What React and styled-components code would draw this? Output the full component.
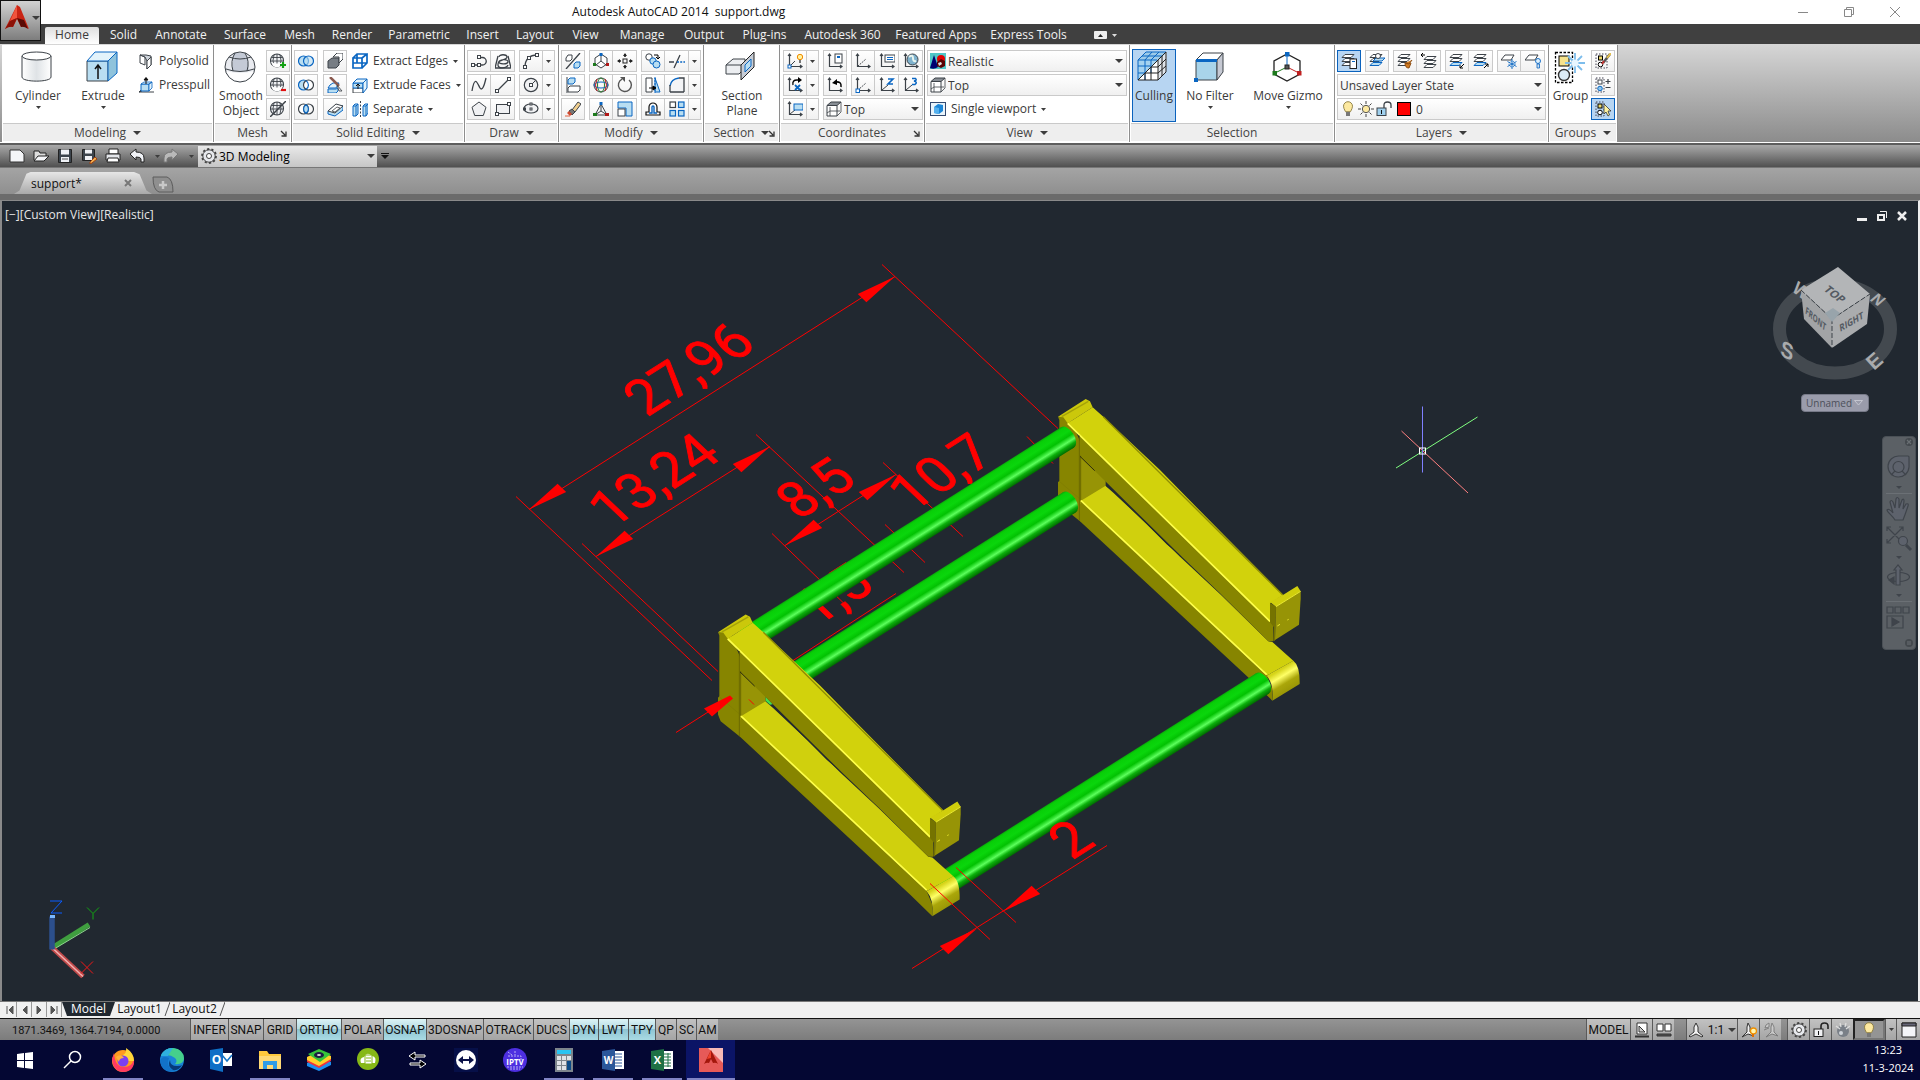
import React from "react";
import styled, { createGlobalStyle, css } from "styled-components";

const GlobalStyle = createGlobalStyle`
  * { box-sizing: border-box; }
  html, body { margin: 0; padding: 0; }
  body, button, select { font-family: "Open Sans", "Noto Sans", sans-serif; font-size: 12px; }
  button, select { margin: 0; padding: 0; border: 0; background: none; color: inherit; }
  svg { display: block; flex: none; }
`;

/* ---------- palette ---------- */
const INK = "#3c4248";
const BLUE = "#0a66c2";
const SKY = "#b9def2";
const GREY = "#e4e8ee";

/* ---------- icon drawings ---------- */
const L = (d, p = {}) => <path d={d} fill="none" stroke={INK} strokeWidth="1.3" {...p} />;
const Dot = ({ x, y, c = INK, s = 3 }) => (
  <rect x={x - s / 2} y={y - s / 2} width={s} height={s} fill="#fff" stroke={c} strokeWidth="1" />
);
const Axes = () => (
  <g fill="none" stroke={INK} strokeWidth="1.2">
    <path d="M2.5 1v13M1 3l1.500-2L4 3M2.500 13.500H15M13 12l2 1.500-2 1.500" />
  </g>
);
const Globe = ({ lower }) => (
  <g>
    <circle cx="7" cy="7.500" r="6.500" fill="#eef0f3" stroke={INK} strokeWidth="1.100" />
    <path d="M1 8h12M2 4.500h10M7 1v13M4 2q-2 5.500 0 11M10 2q2 5.500 0 11" fill="none" stroke={INK} strokeWidth=".9" />
    {lower && <path d="M1 9q6 3 12 0l-2 4q-4 2.500-8 0z" fill="#fff" />}
  </g>
);
const Layers3 = ({ hot }) => (
  <g fill="#fff" stroke={INK} strokeWidth="1">
    <path d="M1 12.500l3-3h9l-3 3z" fill={hot ? SKY : "#fff"} stroke={hot ? BLUE : INK} />
    <path d="M1 8.500l3-3h9l-3 3z" />
    <path d="M1 4.500l3-3h9l-3 3z" />
  </g>
);

const ICONS = {
  cylinder: (
    <g>
      <defs>
        <linearGradient id="cyl" x1="0" x2="1"><stop offset="0" stopColor="#fff" /><stop offset=".5" stopColor="#dfe3e6" /><stop offset="1" stopColor="#fff" /></linearGradient>
      </defs>
      <path d="M1 5v21c0 5.500 29 5.500 29 0V5" fill="url(#cyl)" stroke={INK} />
      <ellipse cx="15.500" cy="5" rx="14.500" ry="4" fill="#fff" stroke={INK} />
    </g>
  ),
  extrude: (
    <g>
      <path d="M1 10h21v20H1z" fill={SKY} stroke={INK} />
      <path d="M1 10l8-9h22l-9 9z" fill="#e3f3fb" stroke={BLUE} />
      <path d="M22 10l9-9v21l-9 8z" fill="#8fc3dc" stroke={BLUE} />
      <path d="M12 28V15M9 18l3-4 3 4" fill="none" stroke="#111" strokeWidth="1.500" />
    </g>
  ),
  polysolid: (
    <g>
      <path d="M2 2l5 2v8l-5-2z" fill="#fff" stroke={INK} />
      <path d="M2 2h6l5 1v9l-4 4V8L7 4z" fill="#cfd5dc" stroke={INK} />
      <path d="M9 8l4-4v8l-4 4z" fill="#fff" stroke={INK} />
    </g>
  ),
  presspull: (
    <g>
      <path d="M1 15l3-3M16 15H1l3-1" stroke={INK} fill="none" />
      <path d="M3 7h8v7H3z" fill={SKY} stroke={BLUE} />
      <path d="M3 7l3-2h8l-3 2zM11 7l3-2v6l-3 3z" fill="#e3f3fb" stroke={BLUE} strokeWidth=".8" />
      <path d="M8 7V1M6 3l2-2.500L10 3z" stroke="#111" fill="#111" />
    </g>
  ),
  smooth: (
    <g>
      <circle cx="16" cy="16" r="15" fill="#e9ebf0" />
      <path d="M10 2h11l3 8H8zM9 10h15l1 10H8z" fill="#c4cad6" />
      <path d="M2 20q14 4 28 0q-4 11-14 11T2 20z" fill="#fdfdfe" />
      <g fill="none" stroke={INK}>
        <circle cx="16" cy="16" r="15" />
        <path d="M5 6q11 4 22 0M2 18q14 5 28 0M11 2q-5 8-2 18M21 2q5 8 2 18" />
      </g>
    </g>
  ),
  meshAdd: <g><Globe lower /><path d="M13 9v6M10 12h6" stroke="#12a012" strokeWidth="2.200" /></g>,
  meshSub: <g><Globe lower /><path d="M11 13h5" stroke="#e01010" strokeWidth="2.200" /></g>,
  meshCut: <g><Globe /><path d="M0 16L16 0" stroke={INK} strokeWidth="1.500" /></g>,
  union: <g fill={SKY} stroke={BLUE} strokeWidth="1.200"><circle cx="5.500" cy="8" r="5" /><circle cx="10.500" cy="8" r="5" fillOpacity=".6" /></g>,
  subtract: <g strokeWidth="1.200"><circle cx="5.500" cy="8" r="5" fill={SKY} stroke={BLUE} /><circle cx="10.500" cy="8" r="5" fill="#fff" stroke={INK} /><path d="M8 3.700a5 5 0 0 1 0 8.600" fill="none" stroke={BLUE} /></g>,
  intersect: <g strokeWidth="1.200"><circle cx="5.500" cy="8" r="5" fill="#fff" stroke={INK} /><circle cx="10.500" cy="8" r="5" fill="none" stroke={INK} /><path d="M8 3.700a5 5 0 0 1 0 8.600a5 5 0 0 1 0-8.600" fill={SKY} stroke={BLUE} /></g>,
  thicken: <g stroke={INK}><path d="M1 8l4-3h7v7l-3 3H1z" fill="#777d84" /><path d="M6 4l4-4h6v6l-4 4V4z" fill="#fff" /></g>,
  slice: <g><path d="M3 8l3-2h6l-3 5H1z" fill="#e3f3fb" stroke={BLUE} /><path d="M1 12h8l2-1v3l-2 2H1z" fill={SKY} stroke={BLUE} /><path d="M3 0l9 9" stroke="#8a5a50" strokeWidth="2.500" /><path d="M10 8l5 6h-3z" fill={GREY} stroke={INK} strokeWidth=".8" /></g>,
  shell: <g><path d="M1 10l8-6 7 1v4l-8 6-7-2z" fill={SKY} stroke={BLUE} /><path d="M1 10l8-7 7 2-8 7z" fill="#fff" stroke={INK} /><path d="M5 10l5-4 3 1-5 4z" fill="none" stroke={INK} strokeWidth=".8" /></g>,
  extractEdges: <g fill="none" stroke={BLUE} strokeWidth="1.700"><path d="M1 5h9v10H1zM1 5l4-4h10l-5 4M15 1v9l-5 5M5 1v9H1M5 10h10" /></g>,
  extrudeFaces: <g><path d="M1 11h10v5H1z" fill="#fff" stroke={INK} /><path d="M1 6h10v5H1z" fill={SKY} stroke={BLUE} /><path d="M1 6l4-4h10l-4 4zM11 6l4-4v9l-4 5z" fill="#e3f3fb" stroke={BLUE} /><path d="M6 12V7M4 9l2-2 2 2" fill="none" stroke="#111" /></g>,
  separate: <g><path d="M1 5l2-2h3v10l-2 2H1zM11 5l2-2h3v9l-2 3h-3z" fill={SKY} stroke={BLUE} /><path d="M4 15V5h-3M14 15V5h-3M4 5l2-2M14 5l2-2" fill="none" stroke={BLUE} /><path d="M8.500 0v16" stroke={INK} strokeDasharray="2 1.500" /></g>,
  polyline: <g>{L("M2 12h9.500a3.500 3.500 0 0 0 0-7.500H8M2 12h5")}<Dot x={2} y={12} /><Dot x={8} y={12} /><Dot x={8} y={4} /></g>,
  helix: <g>{L("M4 4c0-3 8-3 8 0s-8 3-8 5 8 3 9 0-9-4-10 2 9 4 10 1")}{L("M3 3L0 15h16L13 3")}</g>,
  arc: <g>{L("M2 14C2 6 7 2 14 2")}<Dot x={2} y={14} /><Dot x={6} y={5} /><Dot x={14} y={2} /></g>,
  spline: L("M1 14C4-4 7 8 9 11S13 10 15 1"),
  line: <g>{L("M2 14L14 2")}<Dot x={2} y={14} /><Dot x={14} y={2} /></g>,
  circle: <g><circle cx="8" cy="8" r="6.700" fill="#f0f1f3" stroke={INK} strokeWidth="1.200" />{L("M8 8l4-4", { strokeWidth: 1 })}<Dot x={8} y={8} /></g>,
  polygon: <path d="M8 1l7 5.300-2.700 8.200H3.700L1 6.300z" fill="#f0f1f3" stroke={INK} />,
  rect: <g><rect x="1.500" y="3.500" width="13" height="9" fill="#f0f1f3" stroke={INK} /><Dot x={2} y={13} /><Dot x={14} y={3} /></g>,
  ellipse: <g><ellipse cx="8" cy="7.500" rx="7" ry="4.500" fill="#f0f1f3" stroke={INK} strokeWidth="1.200" /><Dot x={8} y={8} s={2} /><Dot x={1.5} y={8} s={2} /><Dot x={8} y={3} s={2} /></g>,
  move3: <g><path d="M1 5l2-3h4v4L5 8H1z" fill="#fff" stroke={INK} /><path d="M9 11l2-2h4v4l-2 2H9z" fill={SKY} stroke={BLUE} />{L("M1 16L15 0")}</g>,
  gizmoMove: <g><path d="M8 1l6 4v6l-6 4-6-4V5z" fill="#fff" stroke={INK} /><path d="M8 8V2M8 8l-5 4M8 8l5 4" stroke={INK} /><rect x="6.500" y="0" width="3" height="3" fill={BLUE} /><rect x="0" y="10" width="3" height="3" fill="#1d7a1d" /><rect x="13" y="10" width="3" height="3" fill="#b01818" /></g>,
  move: <g stroke="#222" fill="none"><rect x="6" y="6" width="4" height="4" /><path d="M8 4V1M8 12v3M4 8H1M12 8h3" strokeWidth="1.600" strokeDasharray="1.500 .7" /><path d="M6 3l2-3 2 3zM6 13l2 3 2-3zM3 6L0 8l3 2zM13 6l3 2-3 2z" fill="#222" stroke="none" /></g>,
  align: <g><path d="M2 0v16" stroke={INK} /><path d="M3 3l2-2h5v4L8 7H3z" fill={SKY} stroke={BLUE} /><path d="M3 11l2-2h10v4l-2 2H3z" fill="#fff" stroke={INK} /></g>,
  gizmoRotate: <g fill="none" strokeWidth="1"><circle cx="8" cy="8" r="7" stroke={INK} /><ellipse cx="8" cy="8" rx="3.500" ry="7" stroke="#2a7a2a" /><ellipse cx="8" cy="8" rx="7" ry="3" stroke={BLUE} /><path d="M4 2q-3 6 0 12M12 2q3 6 0 12" stroke="#c02020" /></g>,
  rotate: <g><path d="M12 3a6.500 6.500 0 1 1-7-.8" fill="none" stroke="#555" strokeWidth="1.400" /><path d="M3 0h5v5z" fill="#555" /></g>,
  mirror: <g><path d="M1 1h6v14H1z" fill="#fff" stroke={INK} /><path d="M10 1l5 14h-5z" fill={SKY} stroke={BLUE} /><path d="M10 0v16" stroke={BLUE} strokeDasharray="2 1" /><path d="M4 11h6M8 9l3 2-3 2z" stroke="#000" fill="#000" /></g>,
  fillet: <g><path d="M1 15V8q1-6 8-7h6v14z" fill="#f3f4f6" /><path d="M1 9q1-7 9-8" fill="none" stroke={BLUE} strokeWidth="1.400" />{L("M1 8v7M10 1h5v14M1 15h14")}</g>,
  erase: <g><path d="M7 9l6-8 3 2-6 8z" fill="#f1cf8f" stroke={INK} /><path d="M4 10l3-2 3 3-3 3z" fill="#777" stroke={INK} /><path d="M2 12l2-2 3 3-2 2z" fill="#d04a30" /><path d="M0 15h5" stroke="#e06040" /></g>,
  gizmoScale: <g><path d="M8 3L2 14h12zM8 10V3M8 10l-6 4M8 10l6 4" fill="none" stroke={INK} /><rect x="6.500" y="1" width="3" height="3" fill={BLUE} /><rect x="0" y="12" width="4" height="3" fill="#1d7a1d" /><rect x="12" y="12" width="4" height="3" fill="#b01818" /></g>,
  scale: <g><path d="M1 1h14v14H9V7H1z" fill={SKY} stroke={BLUE} /><rect x="1" y="8" width="7" height="7" fill="#fff" stroke={INK} /></g>,
  copy: <g><circle cx="4" cy="4" r="3.200" fill="#fff" stroke={INK} /><circle cx="8" cy="8" r="3.200" fill={SKY} stroke={BLUE} /><circle cx="11.500" cy="11.500" r="3.500" fill={SKY} stroke={BLUE} /><path d="M9 2h4v3M11 4l2 2 2-2" fill="none" stroke="#000" /></g>,
  trim: <g>{L("M0 9h5M11 2L5 15")}<path d="M8 9h8" stroke={BLUE} strokeWidth="1.400" strokeDasharray="2 1.200" /></g>,
  offset: <g fill="none"><path d="M1 14h14v-3h-3V6a4 4 0 0 0-8 0v5H1z" stroke="#111" strokeWidth="1.200" /><path d="M4 12h3V6a1 1 0 0 1 2 0v6h3" stroke={BLUE} strokeWidth="1.400" /></g>,
  array: <g strokeWidth="1.200"><rect x="1" y="1" width="5.500" height="5.500" fill="#fff" stroke={INK} /><g fill={SKY} stroke={BLUE}><rect x="9.500" y="1" width="5.500" height="5.500" /><rect x="1" y="9.500" width="5.500" height="5.500" /><rect x="9.500" y="9.500" width="5.500" height="5.500" /></g></g>,
  section: (
    <g>
      <path d="M1 14l7-6h12v9l-6 6H1z" fill="#eceef1" stroke={INK} /><path d="M1 14h15" stroke={INK} />
      <path d="M16 14l13-13v15L16 29z" fill="#c7ccd4" stroke="#222" /><path d="M20 14l6-6v7l-6 6z" fill={SKY} stroke={BLUE} />
    </g>
  ),
  ucs: <g><Axes /><path d="M3 13l5-5" stroke={INK} /><rect x="1" y="12" width="3" height="3" fill="#fff" stroke={BLUE} /><circle cx="13" cy="4" r="2.700" fill="#fff3a0" stroke="#f08a00" /><path d="M12 7h2v3h-2z" fill="#777" /></g>,
  ucsCalc: <g><Axes /><rect x="8" y="1" width="7" height="9" fill="#fff" stroke={INK} /><rect x="10" y="3" width="3" height="2" fill={BLUE} /></g>,
  ucsPlain: <g><Axes /><path d="M3 13l8-7" stroke={INK} strokeDasharray="1.500 1" /></g>,
  ucsList: <g><Axes /><rect x="6" y="2" width="10" height="7" fill="#fff" stroke={INK} /><path d="M8 4.500h6M8 6.500h6" stroke={BLUE} /></g>,
  ucsWorld: <g><Axes /><circle cx="9.500" cy="6.500" r="5.500" fill="#7fb2cd" stroke={INK} /><path d="M6 4q4-3 4 1t3 3" fill="none" stroke="#e8f4ee" strokeWidth="2" /></g>,
  ucsX: <g><Axes /><path d="M6 8q-1-5 4-5h3" fill="none" stroke="#000" strokeWidth="1.300" /><path d="M11 0l4 3-4 3z" /><path d="M8 8l5 5M13 8l-5 5" stroke={BLUE} strokeWidth="1.800" /></g>,
  ucsBack: <g><Axes /><path d="M14 10q1-6-6-5" fill="none" stroke="#000" strokeWidth="1.600" /><path d="M5 6l5-4v6z" /></g>,
  ucsOrigin: <g><Axes /><path d="M3 13l8-7" stroke={INK} strokeDasharray="1.500 1" /><rect x="1" y="12" width="3.500" height="3.500" fill="#fff" stroke={BLUE} /></g>,
  ucsZ: <g><Axes /><path d="M3 13l6-5" stroke={INK} /><path d="M9 2h5l-5 5h5" fill="none" stroke={BLUE} strokeWidth="1.600" /></g>,
  ucs3: <g><Axes /><path d="M3 13l6-5" stroke={INK} /><path d="M9 1.500h3.500q2 2-1.500 2.500q4 1 1 3.500H9" fill="none" stroke={BLUE} strokeWidth="1.500" /></g>,
  ucsView: <g><Axes /><path d="M3 13l5-4" stroke={INK} /><rect x="7" y="3" width="9" height="6" fill={SKY} stroke={BLUE} /></g>,
  topView: <g fill="none" stroke={INK}><path d="M1 4.500h10V15H1z" fill="#fff" /><path d="M1 4.500L5 1h10l-4 3.500z" fill="#888e95" /><path d="M11 15l4-4V1M4 15V6M1 12l3-2h10" strokeWidth=".8" /></g>,
  realistic: <g><rect width="16" height="16" fill="#4fc6c6" /><path d="M0 15L4 2l4 12q-4 3-8 1z" fill="#000070" /><circle cx="11" cy="6" r="4" fill="#e00000" /><path d="M7 9l4-3 4 2v5l-4 2-4-2z" fill="#5a0000" /><path d="M8 10l3-1 1 2-3 2z" fill="#ddd" /></g>,
  viewport: <g><rect x=".5" y="1.500" width="15" height="13" fill="#e9f4fb" stroke="#334a70" /><path d="M4 6l4-3 5 1v6l-4 3-5-1z" fill="#1a86d8" /><path d="M4 6l5 1v6l-5-1z" fill="#54b0ee" /></g>,
  culling: (
    <g>
      <path d="M1 9h20v20H1z" fill="#fff" /><path d="M1 9l8-8h21l-1 20-8 8V9z" fill="#dfe4ea" /><path d="M1 29V9l8-8h21L1 29z" fill="#7fbfe8" fillOpacity=".7" />
      <g fill="none" stroke={BLUE}><path d="M1 29V9l8-8h20M1 9h19M5 5h20M8 29V9l7-8M14 22V9l8-8M1 15h13M1 22h7" /></g>
      <g fill="none" stroke="#222"><path d="M21 9l8-8v20l-8 8zM1 29L29 1M1 29h20M8 22h13l8-7M14 16h7l8-8M8 22v7M14 16v13M25 5v20" /></g>
    </g>
  ),
  noFilter: <g><path d="M3 9h21v20H3z" fill="#a9d4ea" stroke={INK} /><path d="M3 9l7-7h20l-6 7z" fill="#fff" stroke={INK} /><path d="M24 9l6-7v19l-6 8z" fill="#c6c9d3" stroke={INK} /><path d="M3 8h21v3H3z" fill={BLUE} /><rect x="1" y="27" width="4" height="4" fill={BLUE} /></g>,
  gizmo: <g><path d="M16 3l13 7v13l-13 7L3 23V10z" fill="#fff" stroke="#222" strokeWidth="1.300" /><path d="M16 16V4" stroke={BLUE} /><path d="M16 16L4 22" stroke="#1d7a1d" /><path d="M16 16l12 6" stroke="#c02020" /><rect x="14" y="1" width="4.500" height="4.500" fill={BLUE} /><rect x="1.500" y="20" width="4.500" height="4.500" fill="#1d7a1d" /><rect x="26" y="20" width="4.500" height="4.500" fill="#c02020" /><rect x="14" y="14" width="4" height="4" fill="#555" stroke="#222" /></g>,
  layerProps: <g><Layers3 /><rect x="9" y="6" width="6.500" height="9.500" fill="#fff" stroke="#222" /><path d="M11 8.500h3" stroke={BLUE} /></g>,
  layerCur: <g><Layers3 hot /><path d="M4 8l3-3h9l-3 3z" fill={SKY} stroke={BLUE} /><circle cx="9" cy="3" r="2.500" fill="#fff" stroke={INK} /></g>,
  layerMatch: <g><Layers3 /><path d="M8 10l4 1 3-4M8 10q0 5 4 5l2-5" stroke="#8a4a10" fill="#d07a20" /></g>,
  layerPrev: <g transform="translate(2 2)"><Layers3 /><path d="M-2 0h4M0-2L-2 0l2 2" stroke="#000" fill="none" /></g>,
  layerIso: <g><Layers3 hot /><path d="M15 11l-4 4M11 12v3h3" stroke="#000" fill="none" /></g>,
  layerUniso: <g><Layers3 hot /><path d="M11 15l4-4M12 11h3v3" stroke="#000" fill="none" /></g>,
  layerFreeze: <g><path d="M0 7l4-5h9l-3 5z" fill="#fff" stroke={INK} /><path d="M11 6v10M6.500 8.500l9 5M15.500 8.500l-9 5" stroke={BLUE} strokeWidth=".9" /><circle cx="11" cy="11" r="3" fill="none" stroke={BLUE} strokeWidth=".9" strokeDasharray="1.500 1" /></g>,
  layerOff: <g><path d="M0 7l4-5h9l-3 5z" fill="#fff" stroke={INK} /><circle cx="13" cy="8" r="2.500" fill="#dff0fb" stroke={BLUE} strokeWidth=".9" /><path d="M12 11h2.500v4H12z" fill="#cfe0ee" stroke={BLUE} strokeWidth=".8" /></g>,
  bulb: <g><path d="M8 .7a4.500 4.500 0 0 1 4.500 4.500q0 2-2 5.500h-5q-2-3.500-2-5.500A4.500 4.500 0 0 1 8 .7z" fill="#fde9a0" stroke="#8a7a40" strokeWidth=".9" /><path d="M6 11h4v4H6z" fill="#777" /></g>,
  sun: <g><circle cx="8" cy="8" r="3.700" fill="#fde9a0" stroke="#555" /><path d="M8 0v3M8 13v3M0 8h3M13 8h3M2.500 2.500l2 2M11.500 11.500l2 2M13.500 2.500l-2 2M2.500 13.500l2-2" stroke="#444" /></g>,
  unlock: <g><rect x="1" y="7" width="9" height="7.500" fill="#9fd0ee" stroke={INK} /><path d="M8 7V4q0-3 3.500-3T15 4v3" fill="none" stroke={INK} strokeWidth="1.300" /><path d="M5.500 9v4" stroke="#111" /></g>,
  lockUi: <g><rect x="1" y="7" width="9" height="7.500" fill="#f0f1f3" stroke="#222" /><path d="M8 7V4q0-3 3.500-3T15 4v3" fill="none" stroke="#222" strokeWidth="1.600" /><path d="M5.500 9v4" stroke="#111" /></g>,
  group: (
    <g>
      <rect x="1.500" y="1.500" width="17" height="30" fill="none" stroke="#000" strokeDasharray="2.500 1.500" strokeWidth="1.300" />
      <rect x="5" y="5" width="10" height="10" fill="#f6e38c" stroke="#000" /><circle cx="10" cy="24" r="5.500" fill="#dcecf6" stroke="#333" strokeWidth="1.400" />
      <g stroke="#7dbdec" strokeWidth="1.800"><path d="M11 12h20M21 2v20M14 5l14 14M28 5L14 19" /></g><circle cx="21" cy="12" r="3.500" fill="#e8f6ff" />
    </g>
  ),
  groupEdit: <g><path d="M1 1h11v14H1z" fill="none" stroke="#445" strokeDasharray="1.500 1.500" /><rect x="3.500" y="3" width="4" height="4" fill="#ecd96a" stroke="#000" /><circle cx="5.500" cy="11.500" r="2.300" fill="#fff" stroke="#000" /><path d="M8 10l7-9" stroke="#555" strokeWidth="2.500" /><path d="M12 5l4-5" stroke="#e2c050" strokeWidth="2" /><path d="M7 11l2-3" stroke="#c03030" strokeWidth="2" /></g>,
  groupAdd: <g><path d="M1 1h8v14H1z" fill="none" stroke="#445" strokeDasharray="1.500 1.500" /><rect x="3" y="3" width="4" height="4" fill="#fff" stroke={INK} /><circle cx="5" cy="11.500" r="2.300" fill="#8ec8ee" stroke={BLUE} /><path d="M13 2v5M10.500 4.500h5M10.500 10.500h5" stroke={INK} strokeWidth="1.200" /></g>,
  groupSel: <g><path d="M1 1h8v14H1z" fill="none" stroke="#445" strokeDasharray="1.500 1.500" /><rect x="3" y="3" width="4" height="4" fill="#ecd96a" stroke="#000" /><circle cx="5" cy="11.500" r="2.300" fill="#fff" stroke="#000" /><path d="M9 3v10l2-2 2 4 1.500-1-1.500-4h3z" fill="#fff3a0" stroke="#333" strokeWidth=".8" /></g>,
  newFile: <path d="M1 2h10l4 4v8H1z" fill="#f4f5f8" stroke="#333" />,
  open: <g><path d="M1 12V3h5l1 2h6v3" fill="#ddd" stroke="#222" /><path d="M1 13l4-5h11l-5 5z" fill="#f4f5f8" stroke="#222" /></g>,
  save: <g><path d="M1.500 1.500h13v13h-13z" fill="#3c444c" stroke="#222" /><path d="M4 1.500h8v5H4zM4 9h8v5H4z" fill="#f0f2f6" /><path d="M5 11h6" stroke="#555" /></g>,
  saveAs: <g><path d="M1.500 1.500h12v11h-12z" fill="#3c444c" stroke="#222" /><path d="M4 1.500h7v4H4zM4 8h7v4H4z" fill="#f0f2f6" /><path d="M9 14l5-5 2 2-5 4-2 1z" fill="#f0b050" stroke="#a04010" /></g>,
  print: <g><path d="M4 1h9v5H4z" fill="#fff" stroke="#222" /><path d="M1 6h14v6H1z" fill="#e4e6ea" stroke="#222" /><path d="M3 10h10l1 4H2z" fill="#fff" stroke="#222" /></g>,
  undo: <path d="M1 6l6-5v3q8 0 8 6v4h-3v-3q0-2-5-2v3z" fill="#f0f2f6" stroke="#222" />,
  redo: <path d="M15 6L9 1v3q-8 0-8 6v4h3v-3q0-2 5-2v3z" fill="#b9b9b9" stroke="#777" />,
  gear: <g><circle cx="8" cy="8" r="6.200" fill="#e6e8ec" stroke="#444" strokeWidth="1" /><circle cx="8" cy="8" r="7" fill="none" stroke="#444" strokeWidth="1.800" strokeDasharray="2.200 2.200" /><circle cx="8" cy="8" r="2.500" fill="#fff" stroke="#444" /></g>,
  modelSpace: <g><path d="M3 1h10v11H3z" fill="#fff" stroke="#333" /><path d="M5 4v6h6z" fill="#ccc" stroke="#333" /><path d="M1 14.500h14" stroke="#333" strokeWidth="2" /></g>,
  quickView: <g><path d="M1 2h6v7H1zM9 2h6v7H9z" fill="#fff" stroke="#333" /><path d="M1 12h14v2H1z" fill="#555" stroke="#333" /></g>,
  annoScale: <path d="M8 1l2 4v5l5 4-1 1-6-3-6 3-1-1 5-4V5z" fill="#f2f2f2" stroke="#333" />,
  annoVis: <g><path d="M7 1l2 4v5l4 4-6-2-6 3 5-5V5z" fill="#f2f2f2" stroke="#333" /><circle cx="12.500" cy="9" r="3" fill="#fff6b0" stroke="#f09000" strokeWidth="1.300" /><path d="M12 12v3" stroke="#e07000" strokeWidth="2" /></g>,
  annoAuto: <g opacity=".55"><path d="M9 1l2 4v5l4 4-6-2-6 3 5-5V5zM3 3l3-2v4L2 6zM1 8l5-2" fill="#ddd" stroke="#555" /></g>,
  ball: <g><circle cx="8" cy="9" r="6" fill="#7a8088" /><path d="M5 1l1 4M11 1l-1 4M1 4l4 3M15 4l-4 3" stroke="#ddd" strokeWidth="1.300" /><circle cx="6" cy="11" r="2" fill="#cfd4da" /></g>,
  cleanScreen: <g><path d="M1 1h14v14H1z" fill="#f4f5f8" stroke="#222" /><path d="M1 1h14v3H1z" fill="#667" stroke="#222" /></g>,
};

const Icon = ({ name, size = 16, box = 16 }) => (
  <svg width={size} height={size} viewBox={`0 0 ${box} ${box}`} aria-hidden="true">{ICONS[name]}</svg>
);
const Caret = ({ w = 5, color = "#3c3c3c" }) => (
  <svg width={w} height={w === 5 ? 3 : 4} viewBox="0 0 8 4" preserveAspectRatio="none" aria-hidden="true">
    <path d="M0 0h8L4 4z" fill={color} />
  </svg>
);

/* ---------- frame ---------- */
const Page = styled.div`
  position: relative;
  display: flex;
  flex-direction: column;
  min-height: 100vh;
  background: #6b6b6b;
  color: #3a3a3a;
  overflow: hidden;
`;
const TitleBar = styled.header`
  display: grid;
  grid-template-columns: 1fr auto;
  height: 24px;
  padding-right: 2px;
  background: #fff;
  color: #111;
`;
const WindowTitle = styled.h1`
  margin: 0;
  padding-left: 572px;
  font-size: 12px;
  font-weight: 400;
  line-height: 24px;
  white-space: pre;
`;
const WindowButtons = styled.div`
  display: flex;
`;
const WindowButton = styled.button`
  display: grid;
  place-items: center;
  width: 46px;
  height: 23px;
`;
const AppButton = styled.button`
  position: absolute;
  top: 0;
  left: 0;
  z-index: 2;
  display: flex;
  align-items: center;
  gap: 3px;
  width: 41px;
  height: 41px;
  padding: 0 2px 6px 4px;
  border: 1px solid #111;
  background: linear-gradient(#d2d2d2, #7d7d7d);
`;
const MenuBar = styled.nav`
  display: flex;
  align-items: flex-end;
  height: 20px;
  padding-left: 45px;
  background: #404040;
`;
const MenuTab = styled.button`
  width: ${(p) => p.$w}px;
  height: 17px;
  padding-bottom: 2px;
  color: ${(p) => (p.$active ? "#3a3a3a" : "#f2f2f2")};
  background: ${(p) => (p.$active ? "linear-gradient(#dedede, #fff)" : "none")};
  border-radius: 2px 2px 0 0;
  line-height: 15px;
  text-align: center;
  white-space: nowrap;
`;
const MenuToggle = styled.button`
  display: flex;
  align-items: center;
  gap: 5px;
  height: 18px;
  padding-left: 20px;
`;
const MiniBox = styled.span`
  display: grid;
  place-items: center;
  width: 13px;
  height: 8px;
  border-radius: 1px;
  background: #eee;
`;

/* ---------- ribbon ---------- */
const Ribbon = styled.section`
  display: flex;
  height: 99px;
  padding: 1px 1px 0 2px;
  background: linear-gradient(#d6d6d6, #8c8c8c);
  border-bottom: 1px solid #fff;
`;
const Panel = styled.section`
  display: flex;
  flex-direction: column;
  width: ${(p) => p.$w}px;
  padding: 0 1px;
  border-right: 1px solid #8e8e8e;
  background: #fff;
`;
const PanelBody = styled.div`
  display: flex;
  flex: 1;
  gap: ${(p) => p.$gap || 0}px;
  padding: 5px 0 0 ${(p) => p.$left || 0}px;
`;
const PanelTitle = styled.h2`
  display: flex;
  align-items: center;
  justify-content: center;
  gap: 7px;
  position: relative;
  height: 18px;
  margin: 0 0 1px;
  border-top: 1px solid #c9c9c9;
  background: #eee;
  font-size: 12px;
  font-weight: 400;
  line-height: 16px;
  color: #444;
`;
const Launcher = styled.button`
  position: absolute;
  right: 3px;
  top: 6px;
  width: 7px;
  height: 7px;
`;
const Column = styled.div`
  display: flex;
  flex-direction: column;
  align-items: ${(p) => (p.$start ? "flex-start" : "stretch")};
  gap: 2px;
`;
const OffsetColumn = styled(Column)`
  margin-left: 4px;
`;
const Indented = styled.div`
  padding-left: 3px;
`;
const Line = styled.div`
  display: flex;
  gap: 4px;
`;
const Joined = styled.div`
  display: flex;
  border: 1px solid #cacaca;
  background: linear-gradient(#fff, #f1f1f1);
`;
const active = css`
  background: #b7d5f2;
  box-shadow: 0 0 0 1px #0a62bd;
`;
const IconButton = styled.button`
  display: grid;
  place-items: center;
  width: ${(p) => (p.$narrow ? 12 : 22)}px;
  height: 20px;
  ${(p) => p.$on && active}
  &:not(:first-child) {
    width: ${(p) => (p.$narrow ? 12 : 24)}px;
    border-left: 1px solid #cacaca;
  }
`;
const BigButton = styled.button`
  display: flex;
  flex-direction: column;
  align-items: center;
  width: ${(p) => p.$w}px;
  height: 73px;
  margin-top: -1px;
  padding-top: 2px;
  white-space: nowrap;
  line-height: 15px;
  ${(p) => p.$on && css`background: #b7d5f2; border: 1px solid #0a62bd; padding-top: 1px;`}
`;
const BigLabel = styled.span`
  margin: 3px 0;
`;
const SmallButton = styled.button`
  display: flex;
  align-items: center;
  gap: 5px;
  height: 22px;
  line-height: 20px;
  white-space: nowrap;
`;
const SelectBox = styled.label`
  display: flex;
  align-items: center;
  gap: 2px;
  width: ${(p) => p.$w}px;
  height: 22px;
  padding: 0 3px 0 2px;
  border: 1px solid #cacaca;
  background: linear-gradient(#fff, #f0f0f0);
`;
const Select = styled.select`
  flex: 1;
  min-width: 0;
  height: 20px;
  appearance: none;
  outline: none;
`;
const Swatch = styled.span`
  width: 14px;
  height: 14px;
  margin: 0 3px;
  border: 1px solid #000;
  background: #f00;
`;

const PickList = ({ w, icons = [], swatch, value, label }) => (
  <SelectBox $w={w}>
    {icons.map((n) => <Icon key={n} name={n} />)}
    {swatch && <Swatch />}
    <Select aria-label={label} defaultValue={value}><option>{value}</option></Select>
    <Caret w={8} />
  </SelectBox>
);

/* names joined in one bordered strip; "v" is a drop-down arrow */
const Strip = ({ names }) => (
  <Joined>
    {names.map((n, i) =>
      n === "v" ? (
        <IconButton key={i} $narrow aria-label="More"><Caret /></IconButton>
      ) : (
        <IconButton key={i} $on={n === "layerProps" || n === "groupSel"} aria-label={n}><Icon name={n} /></IconButton>
      )
    )}
  </Joined>
);
const Strips = ({ rows }) => <Column $start>{rows.map((r, i) => <Strip key={i} names={r} />)}</Column>;
const Big = ({ w, icon, lines, caret, on }) => (
  <BigButton $w={w} $on={on}>
    <Icon name={icon} size={34} box={34} />
    <BigLabel>{lines.map((l, i) => <React.Fragment key={l}>{i > 0 && <br />}{l}</React.Fragment>)}</BigLabel>
    {caret && <Caret />}
  </BigButton>
);
const Small = ({ icon, text, caret }) => (
  <SmallButton><Icon name={icon} />{text}{caret && <Caret />}</SmallButton>
);
const Group = ({ w, title, caret, launch, left, gap, children }) => (
  <Panel $w={w}>
    <PanelBody $left={left} $gap={gap}>{children}</PanelBody>
    <PanelTitle>
      {title}
      {caret && <Caret w={8} />}
      {launch && (
        <Launcher aria-label={`${title} options`}>
          <svg width="7" height="7" viewBox="0 0 7 7"><path d="M1 1l4 4M6 1.500V6H1.500" fill="none" stroke="#333" strokeWidth="1.300" /></svg>
        </Launcher>
      )}
    </PanelTitle>
  </Panel>
);

/* ---------- quick access + file tabs ---------- */
const QuickBar = styled.div`
  display: flex;
  align-items: center;
  height: 24px;
  padding-left: 8px;
  border-top: 2px solid #5e5e5e;
  background: linear-gradient(#a9a9a9, #505050);
`;
const QuickButton = styled.button`
  display: grid;
  place-items: center;
  width: ${(p) => p.$w || 24}px;
  height: 20px;
  padding-right: ${(p) => (p.$w ? 0 : 6)}px;
`;
const Workspace = styled.label`
  display: flex;
  align-items: center;
  gap: 2px;
  width: 179px;
  height: 21px;
  margin: 0 4px 0 2px;
  padding: 0 2px 0 3px;
  background: linear-gradient(#e9e9e9, #c6c6c6);
  color: #000;
`;
const FileTabs = styled.div`
  display: flex;
  align-items: flex-end;
  height: 27px;
  padding-left: 14px;
  border-top: 1px solid #777;
  background: linear-gradient(#a4a4a4, #8f8f8f);
`;
const FileTab = styled.button`
  display: flex;
  align-items: center;
  justify-content: space-between;
  width: 138px;
  height: 22px;
  padding: 0 20px 0 17px;
  clip-path: polygon(0 100%, 4% 84%, 9% 8%, 12% 0, 87% 0, 91% 10%, 96% 84%, 100% 100%);
  background: linear-gradient(#e6e6e6, #a9a9a9);
  color: #111;
`;
const NewTab = styled.button`
  width: 22px;
  height: 20px;
`;

/* ---------- drawing area ---------- */
const Viewport = styled.main`
  position: relative;
  flex: 1;
  min-height: 0;
  margin-top: 6px;
  border: solid #8a8a8a;
  border-width: 1px 2px 0 2px;
  border-right-color: #eee;
  background: #212830;
`;
const Scene = styled.svg`
  position: absolute;
  inset: 0;
  width: 100%;
  height: 100%;
`;
const ViewLabel = styled.div`
  position: absolute;
  top: 5px;
  left: 3px;
  color: #e6e6e6;
  line-height: 18px;
`;
const MdiButtons = styled.div`
  position: absolute;
  top: 9px;
  right: 10px;
  display: flex;
  gap: 8px;
`;
const MdiButton = styled.button`
  width: 12px;
  height: 12px;
`;
const CubeBox = styled.div`
  position: absolute;
  top: 59px;
  right: 13px;
  display: flex;
  flex-direction: column;
  align-items: center;
  gap: 12px;
  width: 140px;
`;
const UcsMenu = styled.button`
  display: flex;
  align-items: center;
  justify-content: space-between;
  width: 68px;
  height: 18px;
  padding: 0 5px 1px 4px;
  border: 1px solid #777a88;
  border-radius: 4px;
  background: #9a9cab;
  color: #4c505a;
  font-size: 10px;
`;
const NavBar = styled.div`
  position: absolute;
  top: 235px;
  right: 2px;
  width: 34px;
  border: 1px solid #4a5056;
  border-radius: 4px;
  background: #5b6065;
`;

/* ---------- bottom ---------- */
const LayoutTabs = styled.div`
  display: flex;
  align-items: flex-start;
  height: 17px;
  padding-left: 2px;
  border-top: 1px solid #777;
  background: #f0f0f0;
  color: #111;
`;
const NavArrow = styled.button`
  display: grid;
  place-items: center;
  width: 15px;
  height: 15px;
  border-right: 1px solid #999;
`;
const LayoutTab = styled.button`
  width: ${(p) => p.$w}px;
  height: 14px;
  line-height: 14px;
  text-align: center;
  color: ${(p) => (p.$on ? "#fff" : "#111")};
  background: ${(p) => (p.$on ? "#212830" : "none")};
  clip-path: ${(p) => (p.$on ? "polygon(0 0, 100% 0, calc(100% - 5px) 100%, 5px 100%)" : "none")};
`;
const Slash = styled.svg`
  width: 6px;
  height: 14px;
`;
const StatusBar = styled.footer`
  display: flex;
  height: 22px;
  border-top: 1px solid #111;
  background: linear-gradient(#949494, #7c7c7c);
  color: #111;
  font-family: Roboto, "Liberation Sans", sans-serif;
`;
const Coordinates = styled.div`
  width: 190px;
  padding: 2px 0 0 12px;
  font-size: 11px;
  line-height: 20px;
`;
const Spacer = styled.div`
  flex: ${(p) => (p.$w ? `0 0 ${p.$w}px` : "1")};
`;
const StatusButton = styled.button`
  display: flex;
  align-items: center;
  justify-content: center;
  gap: 4px;
  width: ${(p) => p.$w}px;
  border-left: 1px solid #5a5a5a;
  background: ${(p) => (p.$on ? "linear-gradient(#dcf3f6 0%, #b4dbe3 48%, #8fc4d2 50%, #a9dbe4 100%)" : "linear-gradient(#c2c2c2, #a4a4a4)")};
  ${(p) => p.$pressed && css`background: #949494; border: 2px inset #777;`}
  font-family: inherit;
  white-space: nowrap;
`;
const TaskBar = styled.footer`
  display: flex;
  justify-content: space-between;
  height: 40px;
  background: #040733;
  color: #fff;
`;
const TaskList = styled.div`
  display: flex;
`;
const Task = styled.button`
  display: flex;
  flex-direction: column;
  align-items: center;
  justify-content: space-between;
  width: 49px;
  height: 40px;
  padding-top: 8px;
  background: ${(p) => (p.$on ? "#0b1466" : "none")};
`;
const Underline = styled.span`
  width: ${(p) => (p.$wide ? "48px" : "40px")};
  height: 2px;
  background: ${(p) => (p.$run ? "#8184c4" : "transparent")};
`;
const Clock = styled.time`
  width: 64px;
  line-height: 18px;
  padding-top: 1px;
  font-size: 11px;
  text-align: center;
`;

/* ---------- model geometry ---------- */
const arrow = ([x, y], s) =>
  `${x},${y} ${x + s * 28.6},${y - s * 25.7} ${x + s * 37.2},${y - s * 17.6}`;
const DIM_TEXT = [
  ["27,96", 647, 418], ["13,24", 612, 529], ["8,5", 799, 521], ["10,7", 912, 513], ["1,5", 817, 627],
];
const DIM_LINES = [
  "M529 510L895 277", "M596 557L770 447", "M785 546L896 475",
  "M516 497L712 681", "M582 544L718 672", "M882 265L1058 429",
  "M756 435L904 573", "M772 534L843 603", "M883 463L963 537", "M885 525L925 563",
  "M1027 437L1053 464", "M793 661L896 594",
];
const DIM_ARROWS = [
  [[529, 510], 1], [[895, 277], -1], [[596, 557], 1], [[770, 447], -1], [[785, 546], 1], [[896, 475], -1],
];

const DimText = ({ t, x, y }) => (
  <text transform={`translate(${x} ${y}) rotate(-32.500) skewX(14)`} fontFamily="Roboto, 'Liberation Sans', sans-serif" fontSize="54" fill="#f00" stroke="#f00" strokeWidth=".8">{t}</text>
);
const Tube = ({ x, y, len }) => (
  <g transform={`translate(${x} ${y}) rotate(-32.200)`}>
    <rect x="0" y="-12" width={len} height="24" fill="url(#tube)" />
    <ellipse cx={len} cy="0" rx="7" ry="12" fill="url(#tube)" />
  </g>
);
const Bracket = ({ tubeEnd }) => (
  <g>
    <path d="M114 158L118 168V350L114 355V405L122 425L180 472H200V280L150 160z" fill="#878500" />
    <path d="M118 352L180 405" stroke="#767400" />
    <path d="M180 270H260V420H180z" fill="#979406" />
    <path d="M183 410L257 365L275 378L480 578L600 690L745 832L757 834L820 890L740 935z" fill="#d0d00d" />
    <path d="M183 410L740 935L757 975V1010L690 945L180 472z" fill="#878500" />
    <path d="M740 935L820 890Q840 905 839 960L757 1010Q762 960 740 935z" fill="url(#cap)" />
    <path d="M257 350L487 580L440 541L380 480L280 386L257 366z" fill="#212830" />
    {tubeEnd && <path d="M257 352L278 374L270 376L257 364z" fill="#3fe04f" />}
    <path d="M143 178L760 775V832H745L600 688L487 580L180 277V215z" fill="#878500" />
    <path d="M143 178L218 130L250 158L420 318L500 400L790 693L750 718V775z" fill="#d2d20c" />
    <path d="M114 158L197 105L210 112L218 130L143 178L130 160z" fill="#cbc80b" />
    <path d="M125 158L205 112" stroke="#a5a208" strokeWidth="4" fill="none" />
    <path d="M143 178L750 772M183 410L740 932" stroke="#ffff4a" strokeWidth="5" fill="none" />
    <path d="M250 158L788 693" stroke="#8e8c04" strokeWidth="4" fill="none" />
    <path d="M178 215V470M182 275V408" stroke="#6b6900" strokeWidth="3" fill="none" />
    <path d="M180 277L224 320" stroke="#2a2a10" strokeWidth="3" />
    <path d="M750 716L768 728L765 830H760L762 790L750 775z" fill="#757300" />
    <path d="M768 728L842 682V705L837 782L765 828z" fill="#979406" />
    <path d="M772 786l8-5M802 768l4-2" stroke="#ecea30" strokeWidth="3" />
    <path d="M750 714L790 692L832 666L842 682L768 728z" fill="#d0ce0c" />
    <path d="M768 728L842 682" stroke="#ecea30" strokeWidth="3" />
  </g>
);

const Drawing = () => (
  <Scene viewBox="2 202 1916 799" role="img" aria-label="Support model">
    <defs>
      <linearGradient id="tube" x1="0" x2="0" y1="0" y2="1">
        <stop offset="0" stopColor="#0aa80a" /><stop offset=".08" stopColor="#08cf08" /><stop offset=".3" stopColor="#0ad60c" />
        <stop offset=".48" stopColor="#02c202" /><stop offset=".68" stopColor="#5cff5c" /><stop offset=".82" stopColor="#0bb00b" /><stop offset="1" stopColor="#006c00" />
      </linearGradient>
      <linearGradient id="cap" x1="0" x2=".5" y1="0" y2="1">
        <stop offset="0" stopColor="#d0d00d" /><stop offset=".35" stopColor="#d6d41a" /><stop offset=".5" stopColor="#ffff66" /><stop offset=".68" stopColor="#aaa60a" /><stop offset="1" stopColor="#8f8c04" />
      </linearGradient>
    </defs>
    <g stroke="#f00" strokeWidth="1" fill="none">{DIM_LINES.map((d) => <path key={d} d={d} />)}</g>
    {DIM_TEXT.map(([t, x, y]) => <DimText key={t} t={t} x={x} y={y} />)}
    {DIM_ARROWS.map(([p, s]) => <polygon key={p} points={arrow(p, s)} fill="#f00" />)}
    <g transform="translate(1020 364.500) scale(.33333)"><Bracket /></g>
    <Tube x={745} y={641} len={381} />
    <Tube x={785} y={682} len={336} />
    <Tube x={940} y={887} len={381} />
    <g transform="translate(680 580) scale(.33333)"><Bracket tubeEnd /></g>
    <DimText t="2" x={1072} y={861} />
    <g stroke="#f00" fill="none">
      <path d="M912 969L1107 846M930 884L990 940M956 868L1016 923M676 733L712 710M749 700L754 705" />
    </g>
    <g fill="#f00">
      <polygon points={arrow([1003, 912], 1)} /><polygon points={arrow([977, 929], -1)} />
      <polygon points="733,699 730,696 704,709 712,717" />
    </g>
    <g fill="none">
      <path d="M1396 468.500L1477.500 417.500" stroke="#80ff80" /><path d="M1401.500 431.500L1468 493.500" stroke="#ff8080" />
      <path d="M1422.500 407v66" stroke="#8080ff" /><rect x="1419.500" y="448.500" width="6" height="6" stroke="#fff" />
    </g>
    <g fill="none">
      <path d="M54 947L89 925" stroke="#3f9f3f" strokeWidth="5" /><path d="M55 949L90 928" stroke="#8fd98f" strokeWidth="1" />
      <path d="M52 948L83 977" stroke="#c04a4a" strokeWidth="5" /><path d="M53 949L83 977" stroke="#f0b0b0" strokeWidth="1.500" />
      <path d="M52 950V917" stroke="#2c4f8c" strokeWidth="5.500" /><path d="M50 917h5" stroke="#7ab8ff" strokeWidth="3" />
      <path d="M50 901.500H62L51 913.500H62" stroke="#0a5cff" /><path d="M87 908L93 914L99 908M93 914V920" stroke="#12a812" />
      <path d="M81 962L93 974M93 962L81 974" stroke="#f01818" />
    </g>
  </Scene>
);

const cubeText = { fontFamily: "'Open Sans', sans-serif", fontWeight: 700, fill: "#545a62" };
const ViewCube = () => (
  <CubeBox>
    <svg width="140" height="122" viewBox="1765 260 140 122" role="img" aria-label="View cube">
      <ellipse cx="1835" cy="329" rx="55.500" ry="44" fill="none" stroke="#43494f" strokeWidth="13" />
      <g fontFamily="'Liberation Sans', sans-serif" fontWeight="700" fill="#a9abad">
        <text transform="translate(1791 291) rotate(35)" fontSize="18">W</text>
        <text transform="translate(1869 300) rotate(35) skewX(-14)" fontSize="16">N</text>
        <text transform="translate(1780 355) rotate(28) skewX(20)" fontSize="21">S</text>
        <text transform="translate(1874 371) rotate(-42)" fontSize="21">E</text>
      </g>
      <path d="M1838 267L1870 294L1832 319L1801 290z" fill="#b3b5b7" />
      <path d="M1801 290L1832 319V348L1804 319z" fill="#a2a4a6" />
      <path d="M1832 319L1870 294L1867 324L1832 348z" fill="#aaacae" />
      <path d="M1801 290L1832 319L1870 294M1832 319V348" fill="none" stroke="#3c4248" strokeDasharray="5 2" />
      <path d="M1825 313l8-5 7 5-8 9z" fill="#98a4ab" />
      <text transform="translate(1823 290) rotate(38) skewX(-14)" fontSize="11" {...cubeText}>TOP</text>
      <text transform="translate(1805 313) rotate(42) skewX(32)" fontSize="8" {...cubeText}>FRONT</text>
      <text transform="translate(1840 332) rotate(-30) skewX(-22)" fontSize="9" {...cubeText}>RIGHT</text>
    </svg>
    <UcsMenu>Unnamed
      <svg width="9" height="6" viewBox="0 0 9 6"><path d="M.5.5h8l-4 4.500z" fill="none" stroke="#c4c6d0" /></svg>
    </UcsMenu>
  </CubeBox>
);

const NavTools = () => (
  <NavBar>
    <svg width="32" height="212" viewBox="0 0 32 212" fill="none" stroke="#3f444b" strokeWidth="1.200" role="img" aria-label="Navigation tools">
      <circle cx="26" cy="5" r="4" fill="#44494e" stroke="none" /><path d="M24 3l4 4M28 3l-4 4" stroke="#6a7074" />
      <path d="M16 19h9q1 0 1 1v10a10.500 10.500 0 1 1-10-11z" fill="#5d626c" /><circle cx="15.500" cy="30" r="5.500" /><path d="M12 34l-4 4M19 34l4 4" />
      <path d="M13 49h6l-3 3z" fill="#3f444b" stroke="none" /><path d="M3 56.500h26M3 164.500h26" stroke="#6b7075" />
      <path d="M12 83C9 78 4 75 4 73q2-2 6 3L7 65q1-3 3 0l2 6 1-9q1-3 3 0v9l3-8q2-2 2 1l-1 8 3-5q3-1 2 2-3 9-5 14z" fill="#5d626c" />
      <path d="M4 90l16 16M20 90L4 106M4 94v-4h4M16 90h4v4M4 102v4h4" /><circle cx="20" cy="104" r="4.500" fill="#5d626c" /><path d="M23 108l5 5" strokeWidth="3" />
      <path d="M13 119h6l-3 3zM13 157h6l-3 3z" fill="#3f444b" stroke="none" />
      <ellipse cx="15.500" cy="140" rx="11" ry="4.500" /><path d="M13 148v-15h-2l4-5 4 5h-2v15z" fill="#5d626c" /><path d="M6 143l5-3v7z" fill="#3f444b" />
      <path d="M4 170h6v6H4zM12 170h6v6h-6zM20 170h6v6h-6zM4 179h16v12H4z" /><path d="M9 181l7 4-7 4z" fill="#3f444b" />
      <circle cx="26" cy="206" r="4" fill="#44494e" stroke="none" /><path d="M24 205h4M24 207h4" stroke="#6a7074" />
    </svg>
  </NavBar>
);

/* ---------- task bar drawings ---------- */
const AcadA = ({ size = 24 }) => (
  <svg width={size} height={size + 4} viewBox="0 0 24 28" aria-hidden="true">
    <path d="M12 1L0 25q4-3 8-2l4-8 4 8q4-1 8 2L15 3z" fill="#c92414" />
    <path d="M12 1L5 17l7-3z" fill="#f0543c" /><path d="M12 14L5 17 0 25q4-3 8-2z" fill="#8c1208" /><path d="M12 14l7 2 4 9q-4-3-7-2z" fill="#5a0a04" />
  </svg>
);
const t = { fontFamily: "'Open Sans', sans-serif", fontWeight: 700, fill: "#fff", textAnchor: "middle" };
const TASKS = [
  ["Start", 0, <path key="a" d="M4 6l7-1v7H4zM12 5l8-1v8h-8zM4 13h7v7l-7-1zM12 13h8v8l-8-1z" fill="#fff" />],
  ["Search", 0, <g key="a" fill="none" stroke="#fff" strokeWidth="1.500"><circle cx="13" cy="9" r="5.500" /><path d="M9 13l-7 7" /></g>],
  ["Firefox", 1, <g key="a"><circle cx="12" cy="13" r="11" fill="#ff9a1f" /><path d="M1 11q1 13 12 13 11-1 10-13-2 8-10 8Q4 19 3 5z" fill="#ff3a62" /><path d="M12 7q4-2 3-7 8 5 8 13H12z" fill="#ffd63a" /><circle cx="12" cy="13" r="5.500" fill="#7b3ff2" /><path d="M5 9q5-4 8 1-5 0-5 4z" fill="#ffb03a" /></g>],
  ["Edge", 0, <g key="a"><circle cx="12" cy="12" r="12" fill="#1a84d8" /><path d="M1 8Q4 0 13 0q11 1 11 11-1 6-9 5 3-3 0-6-6-5-14-2z" fill="#45cf8c" /><path d="M1 8Q4 0 13 0L8 8z" fill="#2fb0e0" /><path d="M9 10q-4 9 6 13Q2 26 0 13 2 7 9 10z" fill="#1272c8" /><path d="M10 12q0 6 7 6 4 0 5-1-3 6-9 5-6-4-3-10z" fill="#073a78" /></g>],
  ["Outlook", 0, <g key="a"><path d="M13 5h10v13H13z" fill="#fff" /><path d="M13 7l5 6 5-6" fill="none" stroke="#1272c4" strokeWidth="1.500" /><path d="M1 2l13-2v24L1 21z" fill="#0f6fc6" /><text x="7.500" y="16" fontSize="12" {...t}>O</text></g>],
  ["Explorer", 1, <g key="a"><path d="M1 3h8l2 3h12v15H1z" fill="#ffc83d" /><path d="M1 8h22v13H1z" fill="#ffd976" /><path d="M5 13h14v8h-4v-4H9v4H5z" fill="#2f9be6" /></g>],
  ["BlueStacks", 0, <g key="a"><path d="M0 15l12-6 12 5v3l-12 6L0 18z" fill="#1b8ef0" /><path d="M0 11l12-6 12 5v3l-12 7L0 14z" fill="#f0333a" /><path d="M0 9l12-6 12 5v3l-12 7L0 12z" fill="#ffd02a" /><path d="M1 6l11-5 12 5-11 8z" fill="#36c43a" /><ellipse cx="12" cy="7" rx="5" ry="3" fill="#1c1f44" /><ellipse cx="12" cy="7" rx="2" ry="1" fill="#ddd" /></g>],
  ["Cloud", 0, <g key="a"><circle cx="12" cy="11" r="11" fill="#86b817" /><path d="M5 15q-2-5 3-6 3-6 8-1 5 1 3 7z" fill="#fff" /><path d="M9 7h7v9H9z" fill="#fff" stroke="#86b817" /><path d="M10 10h5M10 13h5" stroke="#86b817" /></g>],
  ["Transfer", 0, <g key="a" fill="#000" stroke="#fff" strokeWidth="1"><path d="M4 8l6-4v3h10v2H10v3zM21 16l-6-4v3H5v2h10v3z" /></g>],
  ["TeamViewer", 0, <g key="a"><rect width="24" height="24" fill="#0b1c6a" opacity=".4" /><circle cx="12" cy="12" r="10" fill="#fff" /><path d="M4 12l5-4v3h6V8l5 4-5 4v-3H9v3z" fill="#0a1148" /></g>],
  ["IPTV", 0, <g key="a"><circle cx="12" cy="12" r="12" fill="#4d2fe0" /><path d="M5 4l4 3M12 3v4M5 8h13v4M4 19h16M7 21h10" stroke="#b9aef5" strokeDasharray="2 1" fill="none" /><text x="12" y="17" fontSize="8" {...t}>IPTV</text></g>],
  ["Calculator", 1, <g key="a"><rect x="3" width="18" height="24" fill="#7d858c" /><rect x="5" y="2" width="14" height="4" fill="#29c4f2" /><g fill="#dfe3e7"><path d="M5 8h4v4H5zM10 8h4v4h-4zM15 8h4v4h-4zM5 13h4v4H5zM10 13h4v4h-4zM5 18h4v4H5zM10 18h4v4h-4z" /></g><path d="M15 13h4v9h-4z" fill="#0b4a86" /></g>],
  ["Word", 1, <g key="a"><path d="M12 3h11v18H12z" fill="#fff" /><path d="M14 6h7M14 9h7M14 12h7M14 15h7M14 18h7" stroke="#2b579a" /><path d="M1 3l13-2v22L1 21z" fill="#2b579a" /><text x="7.500" y="16" fontSize="10" {...t}>W</text></g>],
  ["Excel", 1, <g key="a"><path d="M12 3h11v18H12z" fill="#fff" /><path d="M14 6h7M14 9h7M14 12h7M14 15h7M14 18h7M18 5v14" stroke="#217346" /><path d="M1 3l13-2v22L1 21z" fill="#1e7145" /><text x="7.500" y="16" fontSize="11" {...t}>X</text></g>],
  ["AutoCAD", 2, <g key="a"><rect width="24" height="24" fill="#e65a58" /><path d="M9 0h15v15z" fill="#ffe3e0" opacity=".7" /><path d="M12 2L5 16q3-2 5-1l2-4 2 4q3-1 5 1z" fill="#a3170c" /><path d="M12 2L8 11l4-1z" fill="#f0432c" /></g>],
];

const MENU = [["Home", 54], ["Solid", 49], ["Annotate", 66], ["Surface", 62], ["Mesh", 47], ["Render", 58], ["Parametric", 76], ["Insert", 51], ["Layout", 54], ["View", 47], ["Manage", 66], ["Output", 58], ["Plug-ins", 63], ["Autodesk 360", 93], ["Featured Apps", 94], ["Express Tools", 91]];
const TOGGLES = [["INFER", 38], ["SNAP", 35], ["GRID", 33], ["ORTHO", 45], ["POLAR", 42], ["OSNAP", 43], ["3DOSNAP", 57], ["OTRACK", 50], ["DUCS", 36], ["DYN", 29], ["LWT", 30], ["TPY", 27], ["QP", 21], ["SC", 20], ["AM", 22]];
const LIT = ["ORTHO", "OSNAP", "DYN", "LWT", "TPY"];

const TabEdge = () => <Slash viewBox="0 0 6 14"><path d="M6 0L1 14" stroke="#555" /></Slash>;

export default function App() {
  return (
    <Page>
      <GlobalStyle />
      <AppButton aria-label="Application menu"><AcadA /><Caret w={8} /></AppButton>
      <TitleBar>
        <WindowTitle>{"Autodesk AutoCAD 2014  support.dwg"}</WindowTitle>
        <WindowButtons>
          <WindowButton aria-label="Minimize"><svg width="10" height="10"><path d="M0 5.500h10" stroke="#888" /></svg></WindowButton>
          <WindowButton aria-label="Restore"><svg width="10" height="10" fill="none" stroke="#888"><path d="M.5 2.500h7v7h-7zM2.500 2.500v-2h7v7h-2" /></svg></WindowButton>
          <WindowButton aria-label="Close"><svg width="10" height="10"><path d="M0 0l10 10M10 0L0 10" stroke="#888" /></svg></WindowButton>
        </WindowButtons>
      </TitleBar>
      <MenuBar>
        {MENU.map(([m, w], i) => <MenuTab key={m} $w={w} $active={i === 0}>{m}</MenuTab>)}
        <MenuToggle aria-label="Minimize ribbon">
          <MiniBox><svg width="5" height="3"><path d="M0 3h5L2.500 0z" fill="#222" /></svg></MiniBox><Caret color="#ddd" />
        </MenuToggle>
      </MenuBar>

      <Ribbon>
        <Group w={212} title="Modeling" caret left={1}>
          <Big w={68} icon="cylinder" lines={["Cylinder"]} caret />
          <Big w={62} icon="extrude" lines={["Extrude"]} caret />
          <OffsetColumn>
            <Small icon="polysolid" text="Polysolid" />
            <Small icon="presspull" text="Presspull" />
          </OffsetColumn>
        </Group>
        <Group w={78} title="Mesh" launch left={2} gap={1}>
          <Big w={48} icon="smooth" lines={["Smooth", "Object"]} />
          <Strips rows={[["meshAdd"], ["meshSub"], ["meshCut"]]} />
        </Group>
        <Group w={173} title="Solid Editing" caret left={1} gap={5}>
          <Strips rows={[["union"], ["subtract"], ["intersect"]]} />
          <Strips rows={[["thicken"], ["slice"], ["shell"]]} />
          <Column $start>
            <Small icon="extractEdges" text="Extract Edges" caret />
            <Small icon="extrudeFaces" text="Extrude Faces" caret />
            <Small icon="separate" text="Separate" caret />
          </Column>
        </Group>
        <Group w={94} title="Draw" caret left={1} gap={4}>
          <Strips rows={[["polyline", "helix"], ["spline", "line"], ["polygon", "rect"]]} />
          <Strips rows={[["arc", "v"], ["circle", "v"], ["ellipse", "v"]]} />
        </Group>
        <Group w={145} title="Modify" caret left={1} gap={4}>
          <Strips rows={[["move3"], ["align"], ["erase"]]} />
          <Strips rows={[["gizmoMove", "move"], ["gizmoRotate", "rotate"], ["gizmoScale", "scale"]]} />
          <Strips rows={[["copy", "trim", "v"], ["mirror", "fillet", "v"], ["offset", "array", "v"]]} />
        </Group>
        <Group w={76} title="Section" caret launch left={1}>
          <Big w={73} icon="section" lines={["Section", "Plane"]} />
        </Group>
        <Group w={145} title="Coordinates" launch left={2} gap={4}>
          <Strips rows={[["ucs", "v"], ["ucsX", "v"], ["ucsView", "v"]]} />
          <Column>
            <Line><Strip names={["ucsCalc"]} /><Strip names={["ucsPlain", "ucsList", "ucsWorld"]} /></Line>
            <Line><Strip names={["ucsBack"]} /><Strip names={["ucsOrigin", "ucsZ", "ucs3"]} /></Line>
            <PickList w={100} icons={["topView"]} value="Top" label="UCS" />
          </Column>
        </Group>
        <Group w={205} title="View" caret left={1}>
          <Column $start>
            <PickList w={200} icons={["realistic"]} value="Realistic" label="Visual style" />
            <PickList w={200} icons={["topView"]} value="Top" label="Named view" />
            <Indented><Small icon="viewport" text="Single viewport" caret /></Indented>
          </Column>
        </Group>
        <Group w={205} title="Selection" left={1}>
          <Big w={44} icon="culling" lines={["Culling"]} on />
          <Big w={68} icon="noFilter" lines={["No Filter"]} caret />
          <Big w={88} icon="gizmo" lines={["Move Gizmo"]} caret />
        </Group>
        <Group w={214} title="Layers" caret left={1}>
          <Column $start>
            <Line>
              <Strip names={["layerProps"]} /><Strip names={["layerCur"]} /><Strip names={["layerMatch", "layerPrev"]} />
              <Strip names={["layerIso", "layerUniso"]} /><Strip names={["layerFreeze", "layerOff"]} />
            </Line>
            <PickList w={209} value="Unsaved Layer State" label="Layer state" />
            <PickList w={209} icons={["bulb", "sun", "unlock"]} swatch value="0" label="Layer" />
          </Column>
        </Group>
        <Group w={69} title="Groups" caret gap={0}>
          <Big w={41} icon="group" lines={["Group"]} />
          <Strips rows={[["groupEdit"], ["groupAdd"], ["groupSel"]]} />
        </Group>
      </Ribbon>

      <QuickBar>
        {["newFile", "open", "save", "saveAs", "print"].map((n) => <QuickButton key={n} aria-label={n}><Icon name={n} /></QuickButton>)}
        <QuickButton aria-label="Undo"><Icon name="undo" /></QuickButton>
        <QuickButton $w={10} aria-label="Undo list"><Caret /></QuickButton>
        <QuickButton aria-label="Redo"><Icon name="redo" /></QuickButton>
        <QuickButton $w={10} aria-label="Redo list"><Caret /></QuickButton>
        <Workspace>
          <Icon name="gear" />
          <Select aria-label="Workspace" defaultValue="3D Modeling"><option>3D Modeling</option></Select>
          <Caret w={8} />
        </Workspace>
        <QuickButton $w={8} aria-label="Customize"><svg width="8" height="6"><path d="M0 0h8v1H0zM0 2h8L4 6z" fill="#111" /></svg></QuickButton>
      </QuickBar>
      <FileTabs>
        <FileTab>support*<svg width="8" height="8"><path d="M1 1l6 6M7 1L1 7" stroke="#777" strokeWidth="2" /></svg></FileTab>
        <NewTab aria-label="New drawing">
          <svg width="22" height="17" viewBox="0 0 22 17"><path d="M1 1h14q6 2 6 15H7Q1 14 1 1z" fill="#8f8f8f" stroke="#5c5c5c" /><path d="M11 5v8M7 9h8" stroke="#c8c8c8" strokeWidth="2.500" /></svg>
        </NewTab>
      </FileTabs>

      <Viewport>
        <Drawing />
        <ViewLabel>[−][Custom View][Realistic]</ViewLabel>
        <MdiButtons>
          <MdiButton aria-label="Minimize drawing"><svg width="12" height="12"><path d="M1 9.500h10" stroke="#eee" strokeWidth="3" /></svg></MdiButton>
          <MdiButton aria-label="Restore drawing"><svg width="12" height="12" fill="none" stroke="#eee"><path d="M2 5h6v5H2z" strokeWidth="2" /><path d="M4 1.500h6.500V8" /></svg></MdiButton>
          <MdiButton aria-label="Close drawing"><svg width="12" height="12"><path d="M2 2l8 8M10 2l-8 8" stroke="#eee" strokeWidth="2.500" /></svg></MdiButton>
        </MdiButtons>
        <ViewCube />
        <NavTools />
      </Viewport>

      <LayoutTabs>
        {["M3 1v8M9 1L5 5l4 4z", "M8 1L4 5l4 4z", "M3 1l4 4-4 4z", "M2 1l4 4-4 4zM8 1v8"].map((d) => (
          <NavArrow key={d} aria-label="Scroll layouts"><svg width="10" height="10"><path d={d} fill="#555" stroke="#555" /></svg></NavArrow>
        ))}
        <LayoutTab $w={53} $on>Model</LayoutTab>
        <LayoutTab $w={49}>Layout1</LayoutTab>
        <TabEdge />
        <LayoutTab $w={49}>Layout2</LayoutTab>
        <TabEdge />
      </LayoutTabs>
      <StatusBar>
        <Coordinates>1871.3469, 1364.7194, 0.0000</Coordinates>
        {TOGGLES.map(([n, w]) => <StatusButton key={n} $w={w} $on={LIT.includes(n)}>{n}</StatusButton>)}
        <Spacer />
        <StatusButton $w={44}>MODEL</StatusButton>
        <StatusButton $w={22} aria-label="Model space"><Icon name="modelSpace" /></StatusButton>
        <StatusButton $w={22} aria-label="Quick view"><Icon name="quickView" /></StatusButton>
        <Spacer $w={12} />
        <StatusButton $w={51}><Icon name="annoScale" />1:1<Caret w={8} /></StatusButton>
        <StatusButton $w={22} aria-label="Annotation visibility"><Icon name="annoVis" /></StatusButton>
        <StatusButton $w={22} aria-label="Auto scale"><Icon name="annoAuto" /></StatusButton>
        <Spacer $w={6} />
        <StatusButton $w={22} aria-label="Workspace"><Icon name="gear" /></StatusButton>
        <StatusButton $w={22} aria-label="Lock UI"><Icon name="lockUi" /></StatusButton>
        <StatusButton $w={22} aria-label="Hardware"><Icon name="ball" /></StatusButton>
        <StatusButton $w={32} $pressed aria-label="Isolate"><Icon name="bulb" /></StatusButton>
        <StatusButton $w={11} aria-label="Status menu"><Caret /></StatusButton>
        <StatusButton $w={24} aria-label="Clean screen"><Icon name="cleanScreen" /></StatusButton>
      </StatusBar>
      <TaskBar>
        <TaskList>
          {TASKS.map(([name, state, art]) => (
            <Task key={name} $on={state === 2} aria-label={name}>
              <svg width="24" height="24" viewBox="0 0 24 24">{art}</svg>
              <Underline $run={state > 0} $wide={state === 2} />
            </Task>
          ))}
        </TaskList>
        <Clock>13:23<br />11-3-2024</Clock>
      </TaskBar>
    </Page>
  );
}
